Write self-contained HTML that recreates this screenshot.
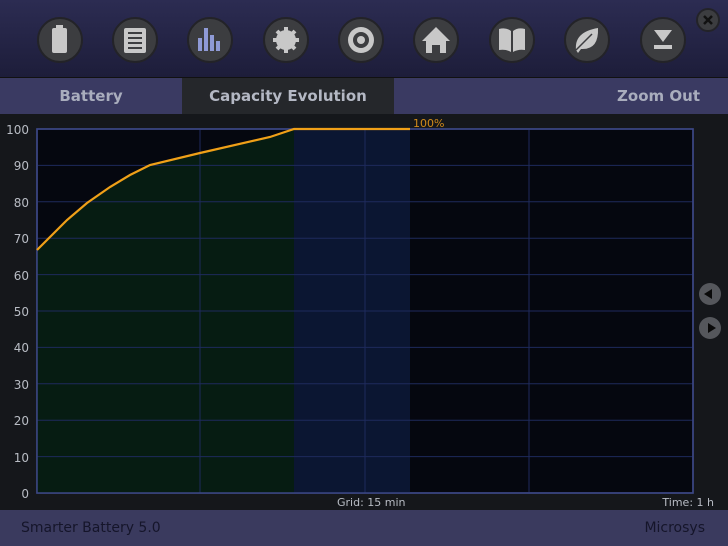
<!DOCTYPE html>
<html><head><meta charset="utf-8"><style>
body{margin:0;width:728px;height:546px;overflow:hidden;background:#15171b;font-family:"DejaVu Sans","Liberation Sans",sans-serif;}
.hdr{position:absolute;left:0;top:0;width:728px;height:77px;background:linear-gradient(#2c2c52,#1d1d3a);border-bottom:1px solid #111;}
.tabs{position:absolute;left:0;top:78px;width:728px;height:36px;background:#3a3a62;}
.tab{position:absolute;top:0;height:36px;line-height:36px;font-size:15px;font-weight:bold;color:#a9adbd;}
.foot{position:absolute;left:0;top:510px;width:728px;height:36px;background:#3a3a5e;color:#15152a;font-size:14px;line-height:36px;}
.lab{position:absolute;font-size:12px;color:#b8bcc4;}
</style></head><body>
<div class="hdr"></div>
<svg style="position:absolute;left:0;top:0" width="728" height="78">
<g fill="#3c3d40" stroke="#232328" stroke-width="2">
<circle cx="60" cy="40" r="22"/><circle cx="135" cy="40" r="22"/><circle cx="210" cy="40" r="22"/><circle cx="286" cy="40" r="22"/><circle cx="361" cy="40" r="22"/><circle cx="436" cy="40" r="22"/><circle cx="512" cy="40" r="22"/><circle cx="587" cy="40" r="22"/><circle cx="663" cy="40" r="22"/>
<circle cx="708" cy="20" r="11"/>
</g>
<g fill="#c8c8c8">
<rect x="52" y="28" width="15" height="25" rx="2"/><rect x="56" y="25" width="7" height="4"/>
<rect x="124" y="28" width="22" height="25" rx="2"/>
<rect x="198" y="38" width="4" height="13" fill="#8f9ad6"/><rect x="204" y="28" width="4" height="23" fill="#8f9ad6"/><rect x="210" y="35" width="4" height="16" fill="#8f9ad6"/><rect x="216" y="41" width="4" height="10" fill="#8f9ad6"/>
<circle cx="286" cy="40" r="10"/>
<circle cx="361" cy="40" r="13"/>
<path d="M436 27 L450 41 L446 41 L446 53 L440 53 L440 45 L432 45 L432 53 L426 53 L426 41 L422 41Z"/>
<path d="M499 29 Q506 27 511 31 L511 52 Q506 49 499 50Z M525 29 Q518 27 513 31 L513 52 Q518 49 525 50Z"/>
<path d="M576 50 Q574 32 598 28 Q599 50 581 49 L578 53Z"/>
<path d="M654 30 L672 30 L663 42Z"/><rect x="654" y="45" width="18" height="4"/>
</g>
<g fill="#3c3d40"><rect x="128" y="32" width="14" height="2"/><rect x="128" y="37" width="14" height="2"/><rect x="128" y="42" width="14" height="2"/><rect x="128" y="47" width="14" height="2"/>
<circle cx="286" cy="40" r="4"/><circle cx="361" cy="40" r="8"/></g>
<circle cx="361" cy="40" r="4" fill="#c8c8c8"/>
<g stroke="#c8c8c8" stroke-width="4"><path d="M286 27v26M273 40h26M277 31l18 18M295 31l-18 18"/></g>
<path d="M576 50 L592 34" stroke="#3c3d40" stroke-width="1.5"/>
<path d="M704 16l8 8M712 16l-8 8" stroke="#111" stroke-width="2.5"/>
</svg>
<div class="tabs">
<div class="tab" style="left:0;width:182px;text-align:center">Battery</div>
<div class="tab" style="left:182px;width:212px;background:#25272b;text-align:center;color:#b4b8c4">Capacity Evolution</div>
<div class="tab" style="left:600px;width:100px;text-align:right">Zoom Out</div>
</div>
<svg style="position:absolute;left:0;top:114px" width="728" height="396">
<rect x="37" y="15" width="656" height="364" fill="#05070f" stroke="#3b4684" stroke-width="1.5"/>
<rect x="294" y="15" width="116" height="364" fill="#0b1632"/>
<path d="M37 134 L67 106 L87 89 L110 73 L130 61 L150 51 L200 39 L270 23 L294 15 L294 379 L37 379Z" fill="#061c12"/>
<g stroke="#1e2a5c" stroke-width="1">
<path d="M37 51.4H693M37 87.8H693M37 124.2H693M37 160.6H693M37 197H693M37 233.4H693M37 269.8H693M37 306.2H693M37 342.6H693M200 15V379M365 15V379M529 15V379"/>
</g>
<rect x="37" y="15" width="656" height="364" fill="none" stroke="#3b4684" stroke-width="1.5"/>
<path d="M37 136 L67 106 L87 89 L110 73 L130 61 L150 51 L200 39 L270 23 L294 15 L410 15" fill="none" stroke="#f0a018" stroke-width="2.2"/>
<text x="413" y="13" font-size="11" fill="#d08a1a" font-family="DejaVu Sans">100%</text>
<g font-size="12" fill="#b8bcc4" text-anchor="end" font-family="DejaVu Sans">
<text x="29" y="20">100</text><text x="29" y="56">90</text><text x="29" y="93">80</text><text x="29" y="129">70</text><text x="29" y="166">60</text><text x="29" y="202">50</text><text x="29" y="238">40</text><text x="29" y="275">30</text><text x="29" y="311">20</text><text x="29" y="348">10</text><text x="29" y="384">0</text>
</g>
<text x="337" y="392" font-size="11" fill="#b8bcc4" font-family="DejaVu Sans">Grid: 15 min</text>
<text x="714" y="392" font-size="11" fill="#b8bcc4" text-anchor="end" font-family="DejaVu Sans">Time: 1 h</text>
<circle cx="710" cy="180" r="11" fill="#55575c"/><path d="M704 180l8-5v10z" fill="#0a0a0a"/>
<circle cx="710" cy="214" r="11" fill="#55575c"/><path d="M716 214l-8-5v10z" fill="#0a0a0a"/>
</svg>
<div class="foot"><span style="position:absolute;left:21px">Smarter Battery 5.0</span><span style="position:absolute;right:23px">Microsys</span></div>
</body></html>
